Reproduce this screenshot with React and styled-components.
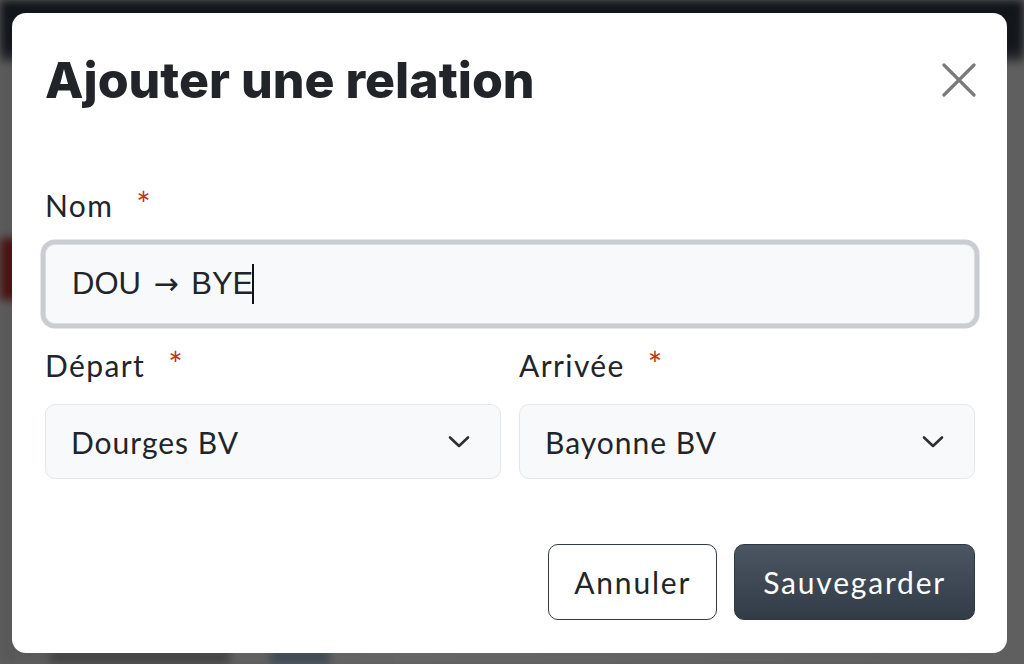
import React from 'react';
import styled, { createGlobalStyle } from 'styled-components';

const GlobalStyle = createGlobalStyle`
  html, body {
    margin: 0;
    padding: 0;
    height: 100%;
  }
  body {
    font-family: 'Lato', 'Liberation Sans', sans-serif;
    background: #5f5f5f;
    overflow: hidden;
  }
  #root {
    height: 100%;
  }
`;

const ChevronDown = () => (
  <svg width="22" height="14" viewBox="0 0 22 14" fill="none">
    <path d="M2 2.5l9 8.5 9-8.5" stroke="#2b3035" strokeWidth="2.6" strokeLinecap="round" strokeLinejoin="round" />
  </svg>
);

const CloseIcon = () => (
  <svg width="34" height="34" viewBox="0 0 34 34" fill="none">
    <path d="M2 2l30 30M32 2L2 32" stroke="#7a7a7a" strokeWidth="3.2" strokeLinecap="round" />
  </svg>
);

const App = () => {
  return (
    <>
      <GlobalStyle />
      <Page>
        <TopBar />
        <PageBody>
          <RedBanner />
          <BottomBlobs>
            <Blob w={180} />
            <Blob w={60} tone="#3f4a55" />
          </BottomBlobs>
        </PageBody>
      </Page>

      <Modal role="dialog" aria-labelledby="modal-title">
        <ModalHeader>
          <Title id="modal-title">Ajouter une relation</Title>
          <CloseButton aria-label="Fermer">
            <CloseIcon />
          </CloseButton>
        </ModalHeader>

        <Field>
          <Label>
            Nom<Required>*</Required>
          </Label>
          <TextInput>
            <InputValue>
              DOU <Arrow>→</Arrow> BYE
            </InputValue>
            <Caret />
          </TextInput>
        </Field>

        <FieldRow>
          <Field>
            <Label>
              Départ<Required>*</Required>
            </Label>
            <Select>
              <span>Dourges BV</span>
              <ChevronDown />
            </Select>
          </Field>
          <Field>
            <Label>
              Arrivée<Required>*</Required>
            </Label>
            <Select>
              <span>Bayonne BV</span>
              <ChevronDown />
            </Select>
          </Field>
        </FieldRow>

        <Footer>
          <CancelButton>Annuler</CancelButton>
          <SaveButton>Sauvegarder</SaveButton>
        </Footer>
      </Modal>
    </>
  );
};

// Background page (dimmed, blurred)
const Page = styled.div`
  height: 100%;
  display: flex;
  flex-direction: column;
  background: #5f5f5f;
  filter: blur(4px);
`;

const TopBar = styled.div`
  height: 62px;
  flex-shrink: 0;
  background: linear-gradient(#12161b 0%, #14181d 80%, #3a3b3d 100%);
`;

const PageBody = styled.div`
  flex: 1;
  display: flex;
  flex-direction: column;
  background: linear-gradient(90deg, #595959 0%, #666 40%, #5f5f5f 100%);
`;

const RedBanner = styled.div`
  margin-top: 176px;
  width: 60px;
  height: 62px;
  background: #4a1313;
`;

const BottomBlobs = styled.div`
  margin-top: auto;
  display: flex;
  gap: 40px;
  padding-left: 50px;
  height: 14px;
`;

const Blob = styled.div`
  width: ${props => props.w}px;
  background: ${props => props.tone || '#444'};
`;

// Modal
const Modal = styled.div`
  position: fixed;
  top: 13px;
  left: 12px;
  width: 995px;
  box-sizing: border-box;
  padding: 37px 32px 33px 33px;
  background: #fff;
  border-radius: 14px;
  display: flex;
  flex-direction: column;
`;

const ModalHeader = styled.div`
  display: flex;
  justify-content: space-between;
  align-items: center;
  margin-bottom: 77px;
`;

const Title = styled.h2`
  margin: 0;
  font-family: 'Inter', sans-serif;
  font-weight: 800;
  font-size: 50px;
  line-height: 60px;
  letter-spacing: 0;
  color: #212529;
`;

const CloseButton = styled.button`
  display: flex;
  background: none;
  border: none;
  padding: 0;
  margin-right: -1px;
  cursor: pointer;
`;

const Field = styled.div`
  display: flex;
  flex-direction: column;
  min-width: 0;
`;

const FieldRow = styled.div`
  display: grid;
  grid-template-columns: 1fr 1fr;
  gap: 18px;
  margin-top: 23px;
`;

const Label = styled.label`
  font-size: 30px;
  line-height: 36px;
  color: #212529;
  margin-bottom: 21px;
  letter-spacing: 1.4px;
`;

const Required = styled.span`
  color: #c2331b;
  font-size: 34px;
  line-height: 0;
  margin-left: 23px;
`;

const TextInput = styled.div`
  height: 80px;
  box-sizing: border-box;
  display: flex;
  align-items: center;
  padding: 0 26px;
  background: #f8f9fa;
  border: 1.5px solid #dadde0;
  border-radius: 10px;
  box-shadow: 0 0 0 4.5px #c9ccd0;
  font-family: 'Liberation Sans', 'Roboto', sans-serif;
  font-size: 31px;
  color: #212529;
`;

const InputValue = styled.span`
  white-space: pre;
`;

const Arrow = styled.span`
  font-family: 'DejaVu Sans', sans-serif;
  font-size: 30px;
  margin: 0 4px;
`;

const Caret = styled.span`
  display: inline-block;
  width: 2px;
  height: 40px;
  margin-left: -1px;
  background: #111;
`;

const Select = styled.div`
  height: 75px;
  box-sizing: border-box;
  display: flex;
  align-items: center;
  justify-content: space-between;
  padding: 0 30px 0 25px;
  background: #f8f9fa;
  border: 1.5px solid #e4e7ea;
  border-radius: 10px;
  font-size: 30px;
  letter-spacing: 1px;
  color: #212529;
`;

const Footer = styled.div`
  display: flex;
  justify-content: flex-end;
  gap: 17px;
  margin-top: 65px;
`;

const BaseButton = styled.button`
  height: 76px;
  box-sizing: border-box;
  padding: 0 28px;
  border-radius: 10px;
  font-family: 'Lato', sans-serif;
  font-size: 30px;
  letter-spacing: 1.8px;
  cursor: pointer;
`;

const CancelButton = styled(BaseButton)`
  padding: 0 25px;
  background: #fff;
  border: 1.5px solid #2f3b46;
  color: #212529;
`;

const SaveButton = styled(BaseButton)`
  background: linear-gradient(#4c5662, #323c47);
  border: 1px solid #2f3944;
  color: #fff;
`;

export default App;
